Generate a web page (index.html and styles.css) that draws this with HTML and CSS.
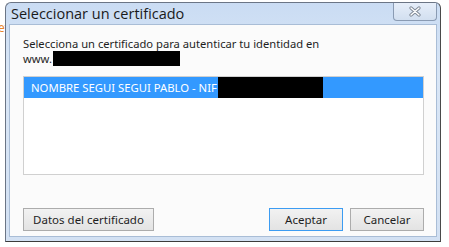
FILE: index.html
```html
<!DOCTYPE html>
<html lang="es">
<head>
    <meta charset="UTF-8">
    <title>Seleccionar un certificado</title>
    <link rel="stylesheet" href="styles.css">
</head>
<body>
    <span class="page-text">et</span>

    <div class="window">
        <div class="title-bar">
            <span class="title">Seleccionar un certificado</span>
            <button class="close-btn">
                <svg width="14" height="11" viewBox="0 0 14 11">
                    <path d="M3 2 L11 9 M11 2 L3 9" stroke="#7d8794" stroke-width="3.2" stroke-linecap="round"/>
                    <path d="M3 2 L11 9 M11 2 L3 9" stroke="#ffffff" stroke-width="1.4" stroke-linecap="round"/>
                </svg>
            </button>
        </div>

        <div class="client">
            <p class="intro">
                Selecciona un certificado para autenticar tu identidad en<br>
                www.<span class="redact redact-url"></span>
            </p>

            <div class="cert-list">
                <div class="cert-row selected">
                    NOMBRE SEGUI SEGUI PABLO - NIF<span class="redact redact-nif"></span>
                </div>
            </div>

            <div class="actions">
                <button class="btn btn-details">Datos del certificado</button>
                <div class="actions-right">
                    <button class="btn btn-default">Aceptar</button>
                    <button class="btn">Cancelar</button>
                </div>
            </div>
        </div>
    </div>
</body>
</html>
```

FILE: styles.css
```css
body {
    margin: 0;
    padding: 2px 0 0 5px;
    background-color: white;
    font-family: "Noto Sans", "Open Sans", sans-serif;
    position: relative;
}

.page-text {
    position: absolute;
    left: -2px;
    top: 19px;
    color: #e8862a;
    font-size: 12px;
}

.window {
    position: relative;
    width: 434px;
    height: 238px;
    border: 1px solid #6b7585;
    border-bottom-color: #3c3c3c;
    border-right-color: #4a4a4a;
    border-radius: 6px 6px 0 0;
    background: linear-gradient(to bottom, #cadcf3, #d9e6f6 30%, #d3e1f3);
    display: flex;
    flex-direction: column;
}

.title-bar {
    height: 21px;
    display: flex;
    justify-content: space-between;
    align-items: flex-start;
    padding-left: 5px;
}

.title {
    font-family: "Open Sans", "Noto Sans", sans-serif;
    font-size: 14.5px;
    color: #1a1a1a;
    line-height: 20px;
    margin-top: 1px;
}

.close-btn {
    width: 44px;
    height: 18px;
    margin-right: 3px;
    padding: 0;
    border: 1px solid #8a9bb3;
    border-top: none;
    border-radius: 0 0 4px 4px;
    background: linear-gradient(to bottom, #e6eef9, #d2dff0);
    display: flex;
    align-items: center;
    justify-content: center;
}

.client {
    flex-grow: 1;
    margin: 0 3px 4px 3px;
    border: 1px solid #a9bdd6;
    background-color: #fbfbfb;
    padding: 11px 12px 5px 13px;
    display: flex;
    flex-direction: column;
}

.intro {
    margin: 0;
    font-size: 11.2px;
    line-height: 15px;
    color: #1e1e1e;
}

.redact {
    display: inline-block;
    background-color: black;
    vertical-align: top;
}

.redact-url {
    width: 127px;
    height: 15px;
    margin-left: 1px;
}

.cert-list {
    margin-top: 10px;
    height: 97px;
    border: 1px solid #d0d0d0;
    background-color: white;
}

.cert-row {
    height: 21px;
    line-height: 21px;
    font-size: 11.3px;
    padding-left: 7px;
    color: #1e1e1e;
    display: flex;
}

.cert-row.selected {
    background-color: #3399ff;
    color: white;
}

.redact-nif {
    width: 105px;
    height: 21px;
    margin-left: 1px;
}

.actions {
    margin-top: auto;
    display: flex;
    justify-content: space-between;
}

.actions-right {
    display: flex;
    gap: 7px;
}

.btn {
    height: 23px;
    width: 74px;
    padding: 0;
    font-family: "Noto Sans", "Open Sans", sans-serif;
    font-size: 11.5px;
    color: #1e1e1e;
    border: 1px solid #acacac;
    background: linear-gradient(to bottom, #f2f2f2, #e3e3e3);
}

.btn-details {
    width: 131px;
}

.btn-default {
    border-color: #3c9cf2;
}
```
